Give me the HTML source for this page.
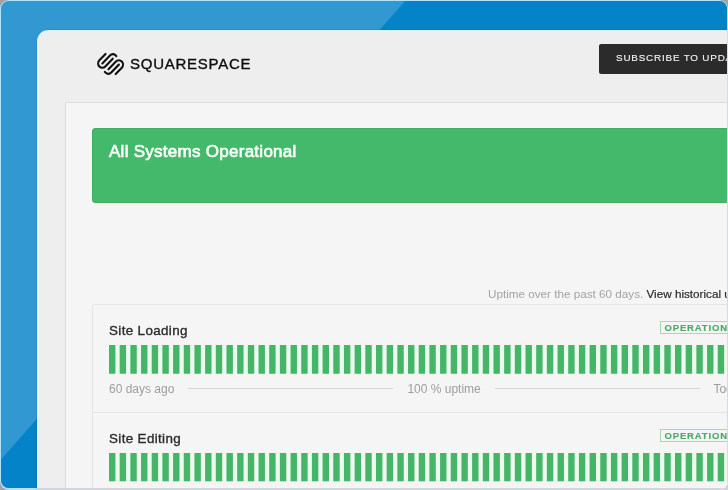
<!DOCTYPE html>
<html><head><meta charset="utf-8">
<style>
*{margin:0;padding:0;box-sizing:border-box}
html,body{width:728px;height:490px;overflow:hidden;background:#a3a3a3;font-family:"Liberation Sans",sans-serif}
#frame{position:absolute;left:0;top:0;width:728px;height:490px;border-radius:9px;overflow:hidden;background:#b3e3fa}
.rs{position:absolute;left:727px;top:30px;width:1px;height:470px;background:#d6dce0}
.bs{position:absolute;left:37px;top:488px;width:700px;height:2px;background:#d2d4de}
#bg{position:absolute;left:1px;top:1px;right:1px;bottom:2px;border-radius:8px;overflow:hidden;background:#3198d2}
#card{position:absolute;left:37px;top:30px;width:760px;height:520px;border-radius:11px;background:#d6f0fd;box-shadow:0 0 2px rgba(0,40,80,0.25)}
#cardin{position:absolute;left:1px;top:1px;right:0;bottom:0;border-radius:10px;background:#eeeeee}
.t{position:absolute;line-height:1;white-space:nowrap;transform:translateZ(0)}
.brand{left:130px;top:55.7px;font-size:15px;letter-spacing:0.74px;color:#0d0d0d;-webkit-text-stroke:0.35px #0d0d0d}
.subbtn{position:absolute;left:599px;top:44px;width:200px;height:30px;background:#2b2b2b;border-radius:2px}
.sub{left:616px;top:52.9px;font-size:9.9px;letter-spacing:0.8px;color:#f0f0f0;-webkit-text-stroke:0.15px #f0f0f0}
#cont{position:absolute;left:65px;top:102px;width:700px;height:420px;border:1px solid #dddddd;background:#f5f5f5}
#banner{position:absolute;left:92px;top:128px;width:660px;height:75px;border-radius:3px;background:#45b96b;border:1px solid #3fae63}
.ban{left:109px;top:142.6px;color:#fbfffb;font-size:17px;letter-spacing:0.27px;-webkit-text-stroke:0.6px #fbfffb}
.uptime{left:488px;top:287.6px;font-size:11.7px;color:#a3a3a3}
.uptime b{font-weight:normal;color:#2a2a2a;-webkit-text-stroke:0.2px #2a2a2a}
#comp{position:absolute;left:92px;top:304px;width:660px;height:220px;border-radius:3px;border:1px solid #e5e5e5;background:#f5f5f5}
.cname{left:109px;font-size:13.4px;letter-spacing:0.36px;color:#2a2a2a;-webkit-text-stroke:0.35px #2a2a2a}
.badge{position:absolute;left:660px;width:80px;height:13px;border:1px solid #a6d8b4}
.btxt{left:664.5px;font-size:9.5px;font-weight:bold;letter-spacing:0.85px;color:#47aa6a;-webkit-text-stroke:0.15px #47aa6a}
.bars{fill:#46b56a;position:absolute;left:109px;width:636.5px;height:29px;background:#eef9f0}
.foot{font-size:12px;color:#9e9e9e}
.hl{position:absolute;height:1px;background:#d5d5d5}
.sep{position:absolute;left:92px;top:412px;width:660px;height:1px;background:#e5e5e5}
</style></head><body>
<div style="position:absolute;left:714px;top:476px;width:14px;height:14px;background:#d0d1d9"></div>
<div id="frame"><div id="bg"><svg width="728" height="490" style="position:absolute;left:-1px;top:-1px"><polygon points="406,0 728,0 728,490 -26,490" fill="#0583c8"/></svg></div>
<div id="card"><div id="cardin"></div></div>

<svg style="position:absolute;left:0;top:0" width="728" height="490"><path id="logo" transform="translate(0 52) scale(1 1.04) translate(0 -52)" fill="none" stroke="#111" stroke-width="2.1" stroke-linecap="round" d="M105.525 53.875L99.375 60.025A4.172 4.172 0 0 0 105.275 65.925L112.725 58.475M108.475 68.625L115.925 61.175A4.172 4.172 0 0 1 121.825 67.075L115.675 73.225M102.325 62.975L109.975 55.325A4.172 4.172 0 0 1 116.342 55.882M118.875 64.125L111.225 71.775A4.172 4.172 0 0 1 104.858 71.218"/></svg>
<div class="t brand">SQUARESPACE</div>
<div class="subbtn"></div>
<div class="t sub">SUBSCRIBE TO UPDATES</div>

<div id="cont"></div>
<div id="banner"></div>
<div class="t ban">All Systems Operational</div>
<div class="t uptime">Uptime over the past 60 days. <b>View historical uptime.</b></div>
<div id="comp"></div>
<div class="sep"></div>

<div class="t cname" style="top:323.6px">Site Loading</div>
<div class="badge" style="top:321px"></div>
<div class="t btxt" style="top:323.1px">OPERATIONAL</div>
<svg class="bars" style="top:345px;height:28.75px" viewBox="0 0 298 34" preserveAspectRatio="none"><rect x="0" width="3" height="34"/><rect x="5" width="3" height="34"/><rect x="10" width="3" height="34"/><rect x="15" width="3" height="34"/><rect x="20" width="3" height="34"/><rect x="25" width="3" height="34"/><rect x="30" width="3" height="34"/><rect x="35" width="3" height="34"/><rect x="40" width="3" height="34"/><rect x="45" width="3" height="34"/><rect x="50" width="3" height="34"/><rect x="55" width="3" height="34"/><rect x="60" width="3" height="34"/><rect x="65" width="3" height="34"/><rect x="70" width="3" height="34"/><rect x="75" width="3" height="34"/><rect x="80" width="3" height="34"/><rect x="85" width="3" height="34"/><rect x="90" width="3" height="34"/><rect x="95" width="3" height="34"/><rect x="100" width="3" height="34"/><rect x="105" width="3" height="34"/><rect x="110" width="3" height="34"/><rect x="115" width="3" height="34"/><rect x="120" width="3" height="34"/><rect x="125" width="3" height="34"/><rect x="130" width="3" height="34"/><rect x="135" width="3" height="34"/><rect x="140" width="3" height="34"/><rect x="145" width="3" height="34"/><rect x="150" width="3" height="34"/><rect x="155" width="3" height="34"/><rect x="160" width="3" height="34"/><rect x="165" width="3" height="34"/><rect x="170" width="3" height="34"/><rect x="175" width="3" height="34"/><rect x="180" width="3" height="34"/><rect x="185" width="3" height="34"/><rect x="190" width="3" height="34"/><rect x="195" width="3" height="34"/><rect x="200" width="3" height="34"/><rect x="205" width="3" height="34"/><rect x="210" width="3" height="34"/><rect x="215" width="3" height="34"/><rect x="220" width="3" height="34"/><rect x="225" width="3" height="34"/><rect x="230" width="3" height="34"/><rect x="235" width="3" height="34"/><rect x="240" width="3" height="34"/><rect x="245" width="3" height="34"/><rect x="250" width="3" height="34"/><rect x="255" width="3" height="34"/><rect x="260" width="3" height="34"/><rect x="265" width="3" height="34"/><rect x="270" width="3" height="34"/><rect x="275" width="3" height="34"/><rect x="280" width="3" height="34"/><rect x="285" width="3" height="34"/><rect x="290" width="3" height="34"/><rect x="295" width="3" height="34"/></svg>
<div class="t foot" style="left:109px;top:382.6px">60 days ago</div>
<div class="hl" style="left:188px;top:388px;width:205px"></div>
<div class="t foot" style="left:407.4px;top:382.6px">100 % uptime</div>
<div class="hl" style="left:495px;top:388px;width:205px"></div>
<div class="t foot" style="left:713.4px;top:382.6px">Today</div>

<div class="t cname" style="top:432.2px">Site Editing</div>
<div class="badge" style="top:429.2px"></div>
<div class="t btxt" style="top:431.4px">OPERATIONAL</div>
<svg class="bars" style="top:453.4px;height:28.3px" viewBox="0 0 298 34" preserveAspectRatio="none"><rect x="0" width="3" height="34"/><rect x="5" width="3" height="34"/><rect x="10" width="3" height="34"/><rect x="15" width="3" height="34"/><rect x="20" width="3" height="34"/><rect x="25" width="3" height="34"/><rect x="30" width="3" height="34"/><rect x="35" width="3" height="34"/><rect x="40" width="3" height="34"/><rect x="45" width="3" height="34"/><rect x="50" width="3" height="34"/><rect x="55" width="3" height="34"/><rect x="60" width="3" height="34"/><rect x="65" width="3" height="34"/><rect x="70" width="3" height="34"/><rect x="75" width="3" height="34"/><rect x="80" width="3" height="34"/><rect x="85" width="3" height="34"/><rect x="90" width="3" height="34"/><rect x="95" width="3" height="34"/><rect x="100" width="3" height="34"/><rect x="105" width="3" height="34"/><rect x="110" width="3" height="34"/><rect x="115" width="3" height="34"/><rect x="120" width="3" height="34"/><rect x="125" width="3" height="34"/><rect x="130" width="3" height="34"/><rect x="135" width="3" height="34"/><rect x="140" width="3" height="34"/><rect x="145" width="3" height="34"/><rect x="150" width="3" height="34"/><rect x="155" width="3" height="34"/><rect x="160" width="3" height="34"/><rect x="165" width="3" height="34"/><rect x="170" width="3" height="34"/><rect x="175" width="3" height="34"/><rect x="180" width="3" height="34"/><rect x="185" width="3" height="34"/><rect x="190" width="3" height="34"/><rect x="195" width="3" height="34"/><rect x="200" width="3" height="34"/><rect x="205" width="3" height="34"/><rect x="210" width="3" height="34"/><rect x="215" width="3" height="34"/><rect x="220" width="3" height="34"/><rect x="225" width="3" height="34"/><rect x="230" width="3" height="34"/><rect x="235" width="3" height="34"/><rect x="240" width="3" height="34"/><rect x="245" width="3" height="34"/><rect x="250" width="3" height="34"/><rect x="255" width="3" height="34"/><rect x="260" width="3" height="34"/><rect x="265" width="3" height="34"/><rect x="270" width="3" height="34"/><rect x="275" width="3" height="34"/><rect x="280" width="3" height="34"/><rect x="285" width="3" height="34"/><rect x="290" width="3" height="34"/><rect x="295" width="3" height="34"/></svg>
<div class="rs"></div><div class="bs"></div>
</div>

</body></html>
